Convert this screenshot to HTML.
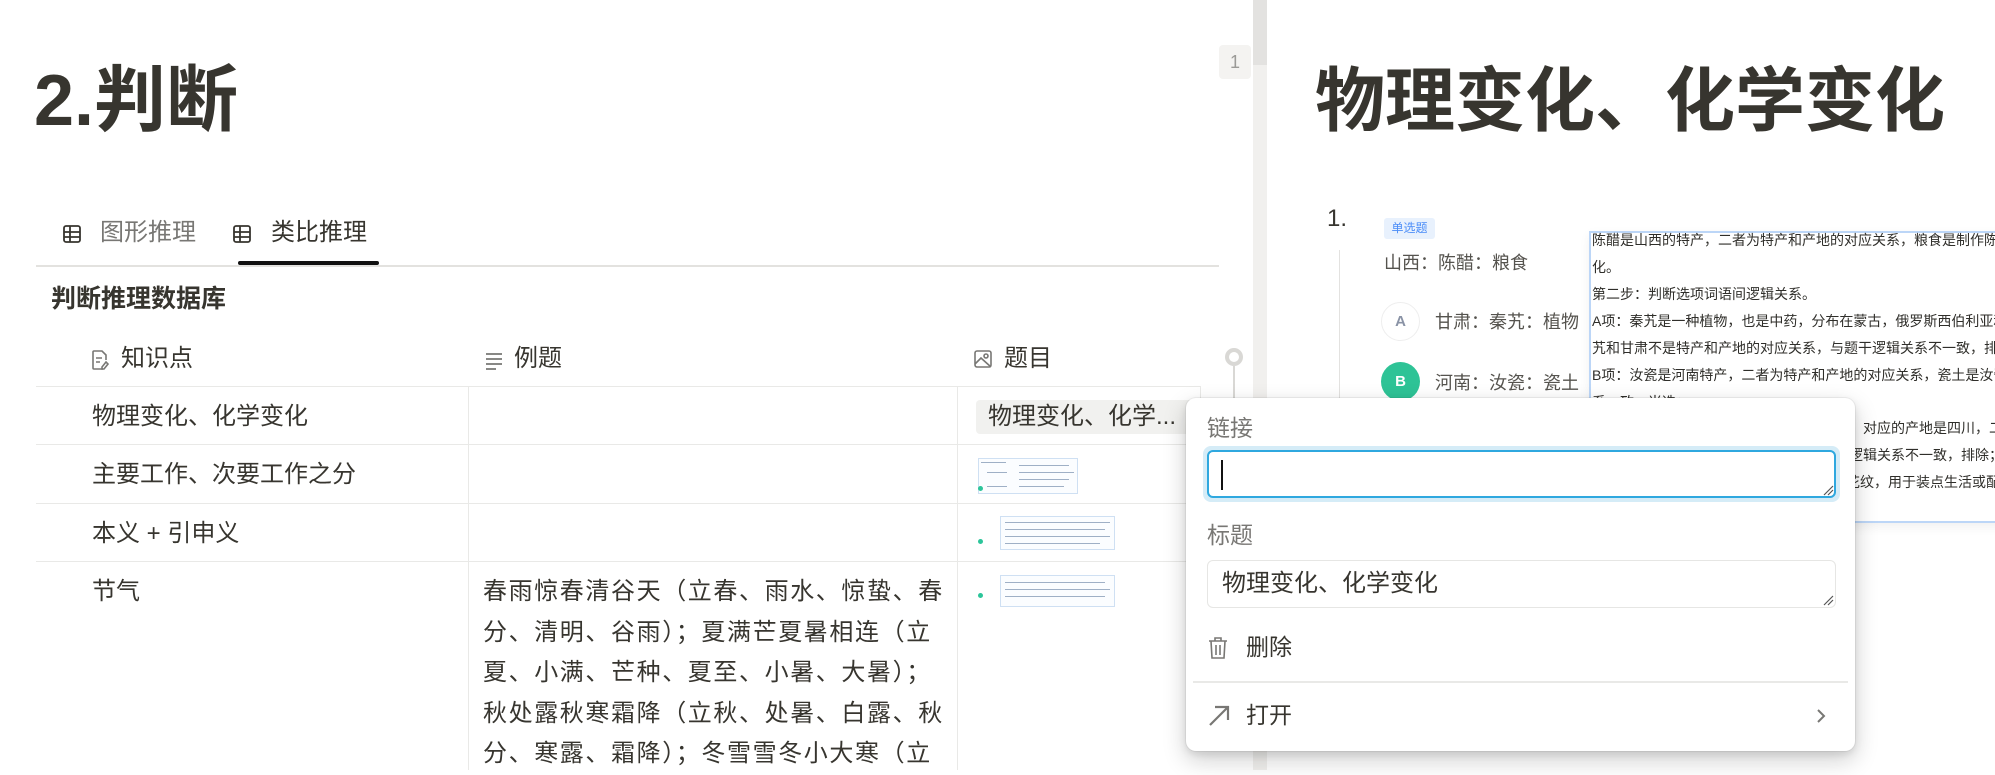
<!DOCTYPE html>
<html><head><meta charset="utf-8"><style>
*{margin:0;padding:0;box-sizing:border-box}
body{width:1995px;height:770px;overflow:hidden;background:#fff;position:relative;font-family:"Liberation Sans","Noto Sans CJK SC",sans-serif;color:#37352f}
.a{position:absolute;white-space:nowrap}
.hl{position:absolute;height:1px;background:#e9e9e7}
.vl{position:absolute;width:1px;background:#e9e9e7}
.cell{font-size:24px;line-height:30px}
.thumb{position:absolute;border:1px solid #cfe0f3;background:#fbfdff}
.thumb i{position:absolute;height:1px;background:#9fb0c6;display:block}
.ex{position:absolute;left:1592px;font-size:14px;line-height:27px;color:#2f2e2a;white-space:nowrap}
</style></head><body>

<div class="a" style="left:34px;top:56px;font-size:72px;font-weight:bold;line-height:90px">2.判断</div>
<div class="a" style="left:1219px;top:45px;width:32px;height:34px;background:#f4f3f1;border-radius:4px;color:#9b9a97;font-size:18px;line-height:34px;text-align:center">1</div>

<svg class="a" style="left:62px;top:224px" width="20" height="20" viewBox="0 0 20 20" fill="none" stroke="#37352f" stroke-width="1.8"><rect x="2" y="2" width="16" height="16" rx="2"/><path d="M2 8h16M2 13h16M8 2v16"/></svg>
<div class="a" style="left:100px;top:217px;font-size:24px;line-height:32px;color:#787774">图形推理</div>
<svg class="a" style="left:232px;top:224px" width="20" height="20" viewBox="0 0 20 20" fill="none" stroke="#37352f" stroke-width="1.8"><rect x="2" y="2" width="16" height="16" rx="2"/><path d="M2 8h16M2 13h16M8 2v16"/></svg>
<div class="a" style="left:271px;top:217px;font-size:24px;line-height:32px">类比推理</div>
<div class="a" style="left:238px;top:261px;width:141px;height:4px;background:#111;border-radius:2px"></div>
<div class="hl" style="left:36px;top:265px;width:1183px;background:#e3e2df;height:2px"></div>

<div class="a" style="left:51px;top:283px;font-size:25px;font-weight:bold;line-height:32px">判断推理数据库</div>

<svg class="a" style="left:90px;top:349px" width="20" height="22" viewBox="0 0 20 22" fill="none" stroke="#787774" stroke-width="1.6"><path d="M13 20H4a1 1 0 0 1-1-1V3a1 1 0 0 1 1-1h8l4 4v5"/><path d="M6 9h6M6 13h4M16 13l-4 5v2h2l4-5z"/></svg>
<div class="a cell" style="left:121px;top:344px">知识点</div>
<svg class="a" style="left:484px;top:350px" width="20" height="20" viewBox="0 0 20 20" stroke="#787774" stroke-width="1.8"><path d="M2 4h16M2 9h16M2 14h16M2 19h10"/></svg>
<div class="a cell" style="left:514px;top:344px">例题</div>
<svg class="a" style="left:973px;top:349px" width="20" height="20" viewBox="0 0 20 20" fill="none" stroke="#787774" stroke-width="1.6"><rect x="2" y="2" width="16" height="16" rx="2"/><circle cx="13" cy="7" r="2"/><path d="M2 15l6-6 10 9"/></svg>
<div class="a cell" style="left:1004px;top:344px">题目</div>

<div class="hl" style="left:36px;top:386px;width:1164px"></div>
<div class="hl" style="left:36px;top:444px;width:1164px"></div>
<div class="hl" style="left:36px;top:503px;width:1164px"></div>
<div class="hl" style="left:36px;top:561px;width:1164px"></div>
<div class="vl" style="left:468px;top:386px;height:384px"></div>
<div class="vl" style="left:957px;top:386px;height:384px"></div>
<div class="vl" style="left:1200px;top:386px;height:60px"></div>

<div class="a cell" style="left:92px;top:402px">物理变化、化学变化</div>
<div class="a cell" style="left:92px;top:460px">主要工作、次要工作之分</div>
<div class="a cell" style="left:92px;top:519px">本义 + 引申义</div>
<div class="a cell" style="left:92px;top:577px">节气</div>

<div class="a" style="left:976px;top:400px;width:220px;height:34px;background:#f1f1ef;border-radius:4px;font-size:24px;line-height:34px;padding-left:12px;overflow:hidden">物理变化、化学...</div>

<div class="thumb" style="left:978px;top:458px;width:100px;height:36px"><i style="left:2px;top:3px;width:25px"></i><i style="left:40px;top:6px;width:50px"></i><i style="left:40px;top:13px;width:55px"></i><i style="left:40px;top:20px;width:50px"></i><i style="left:40px;top:27px;width:45px"></i><i style="left:8px;top:13px;width:20px"></i><i style="left:8px;top:27px;width:20px"></i></div>
<div class="thumb" style="left:1000px;top:516px;width:115px;height:34px"><i style="left:4px;top:5px;width:105px"></i><i style="left:4px;top:12px;width:100px"></i><i style="left:4px;top:19px;width:105px"></i><i style="left:4px;top:26px;width:95px"></i></div>
<div class="thumb" style="left:1000px;top:575px;width:115px;height:32px"><i style="left:4px;top:6px;width:100px"></i><i style="left:4px;top:13px;width:105px"></i><i style="left:4px;top:20px;width:100px"></i></div>
<div class="a" style="left:978px;top:593px;width:5px;height:5px;border-radius:50%;background:#2cc59a"></div>
<div class="a" style="left:978px;top:486px;width:5px;height:5px;border-radius:50%;background:#2cc59a"></div>
<div class="a" style="left:978px;top:539px;width:5px;height:5px;border-radius:50%;background:#2cc59a"></div>

<div class="a" style="left:483px;top:572px;font-size:24px;line-height:40.5px;letter-spacing:1.6px">春雨惊春清谷天（立春、雨水、惊蛰、春<br>分、清明、谷雨）；夏满芒夏暑相连（立<br>夏、小满、芒种、夏至、小暑、大暑）；<br>秋处露秋寒霜降（立秋、处暑、白露、秋<br>分、寒露、霜降）；冬雪雪冬小大寒（立</div>

<div class="a" style="left:1225px;top:348px;width:18px;height:18px;border-radius:50%;border:4px solid #d9d8d5;background:#fff"></div>
<div class="a" style="left:1233px;top:366px;width:2px;height:34px;background:#d9d8d5"></div>

<div class="a" style="left:1253px;top:0;width:14px;height:770px;background:#f1f0ee"></div>
<div class="a" style="left:1253px;top:0;width:14px;height:65px;background:#e3e2e0"></div>

<div class="a" style="left:1315px;top:56px;font-size:70px;font-weight:bold;line-height:90px">物理变化、化学变化</div>
<div class="a" style="left:1327px;top:204px;font-size:24px;line-height:30px">1.</div>
<div class="a" style="left:1384px;top:218px;width:51px;height:21px;background:#e8f1fd;border-radius:3px;color:#4b8df8;font-size:12px;line-height:21px;text-align:center">单选题</div>
<div class="a" style="left:1339px;top:250px;width:1px;height:150px;background:#e3e2e0"></div>
<div class="a" style="left:1384px;top:251px;font-size:18px;line-height:24px;color:#55534e">山西：陈醋：粮食</div>
<div class="a" style="left:1381px;top:302px;width:39px;height:39px;border-radius:50%;border:1px solid #eee;color:#8a93a6;font-size:15px;font-weight:bold;line-height:37px;text-align:center">A</div>
<div class="a" style="left:1435px;top:310px;font-size:18px;line-height:24px;color:#55534e">甘肃：秦艽：植物</div>
<div class="a" style="left:1381px;top:362px;width:39px;height:39px;border-radius:50%;background:#2ec396;color:#fff;font-size:15px;font-weight:bold;line-height:39px;text-align:center">B</div>
<div class="a" style="left:1435px;top:371px;font-size:18px;line-height:24px;color:#55534e">河南：汝瓷：瓷土</div>

<div class="a" style="left:1589px;top:231px;width:420px;height:292px;border:2px solid #bcd6f7;border-right:none;background:#fff;box-shadow:0 4px 10px rgba(0,0,0,.06)"></div>
<div class="ex" style="top:227px">陈醋是山西的特产，二者为特产和产地的对应关系，粮食是制作陈醋</div>
<div class="ex" style="top:254px">化。</div>
<div class="ex" style="top:281px">第二步：判断选项词语间逻辑关系。</div>
<div class="ex" style="top:308px">A项：秦艽是一种植物，也是中药，分布在蒙古，俄罗斯西伯利亚和</div>
<div class="ex" style="top:335px">艽和甘肃不是特产和产地的对应关系，与题干逻辑关系不一致，排除</div>
<div class="ex" style="top:362px">B项：汝瓷是河南特产，二者为特产和产地的对应关系，瓷土是汝瓷</div>
<div class="ex" style="top:389px">系一致，当选；</div>
<div class="ex" style="top:415px;left:1863px">对应的产地是四川，二者为</div>
<div class="ex" style="top:442px;left:1849px">逻辑关系不一致，排除；</div>
<div class="ex" style="top:469px;left:1846px">花纹，用于装点生活或配饰</div>

<div class="a" style="left:1186px;top:398px;width:669px;height:353px;background:#fff;border-radius:10px;box-shadow:0 0 0 1px rgba(15,15,15,.05),0 3px 8px rgba(15,15,15,.1),0 9px 24px rgba(15,15,15,.2)"></div>
<div class="a" style="left:1207px;top:413px;font-size:23px;line-height:30px;color:#787774">链接</div>
<div class="a" style="left:1203px;top:446px;width:637px;height:56px;border-radius:8px;background:#d5ecf7"></div>
<div class="a" style="left:1207px;top:450px;width:629px;height:48px;border:2px solid #2fa8df;border-radius:6px;background:#fff"></div>
<div class="a" style="left:1221px;top:460px;width:2px;height:30px;background:#111"></div>
<svg class="a" style="left:1822px;top:484px" width="12" height="12"><path d="M2 11L11 2M6 11l5-5" stroke="#555" stroke-width="1.2"/></svg>
<div class="a" style="left:1207px;top:520px;font-size:23px;line-height:30px;color:#787774">标题</div>
<div class="a" style="left:1207px;top:560px;width:629px;height:48px;border:1px solid #e6e6e4;border-radius:6px;background:#fff"></div>
<div class="a" style="left:1222px;top:569px;font-size:24px;line-height:30px">物理变化、化学变化</div>
<svg class="a" style="left:1822px;top:594px" width="12" height="12"><path d="M2 11L11 2M6 11l5-5" stroke="#555" stroke-width="1.2"/></svg>

<svg class="a" style="left:1207px;top:636px" width="22" height="24" viewBox="0 0 22 24" fill="none" stroke="#787774" stroke-width="1.6"><path d="M2 5h18M8 5V2h6v3M4 5l1 17h12l1-17M9 9v10M13 9v10"/></svg>
<div class="a" style="left:1246px;top:632px;font-size:23px;line-height:30px">删除</div>
<div class="a" style="left:1193px;top:681px;width:655px;height:2px;background:#e9e9e7"></div>
<svg class="a" style="left:1207px;top:704px" width="24" height="24" viewBox="0 0 24 24" fill="none" stroke="#787774" stroke-width="2.2"><path d="M3 21L21 3M8 3h13v13"/></svg>
<div class="a" style="left:1246px;top:700px;font-size:23px;line-height:30px">打开</div>
<svg class="a" style="left:1815px;top:707px" width="12" height="18" viewBox="0 0 12 18" fill="none" stroke="#787774" stroke-width="2"><path d="M3 3l6 6-6 6"/></svg>
</body></html>
